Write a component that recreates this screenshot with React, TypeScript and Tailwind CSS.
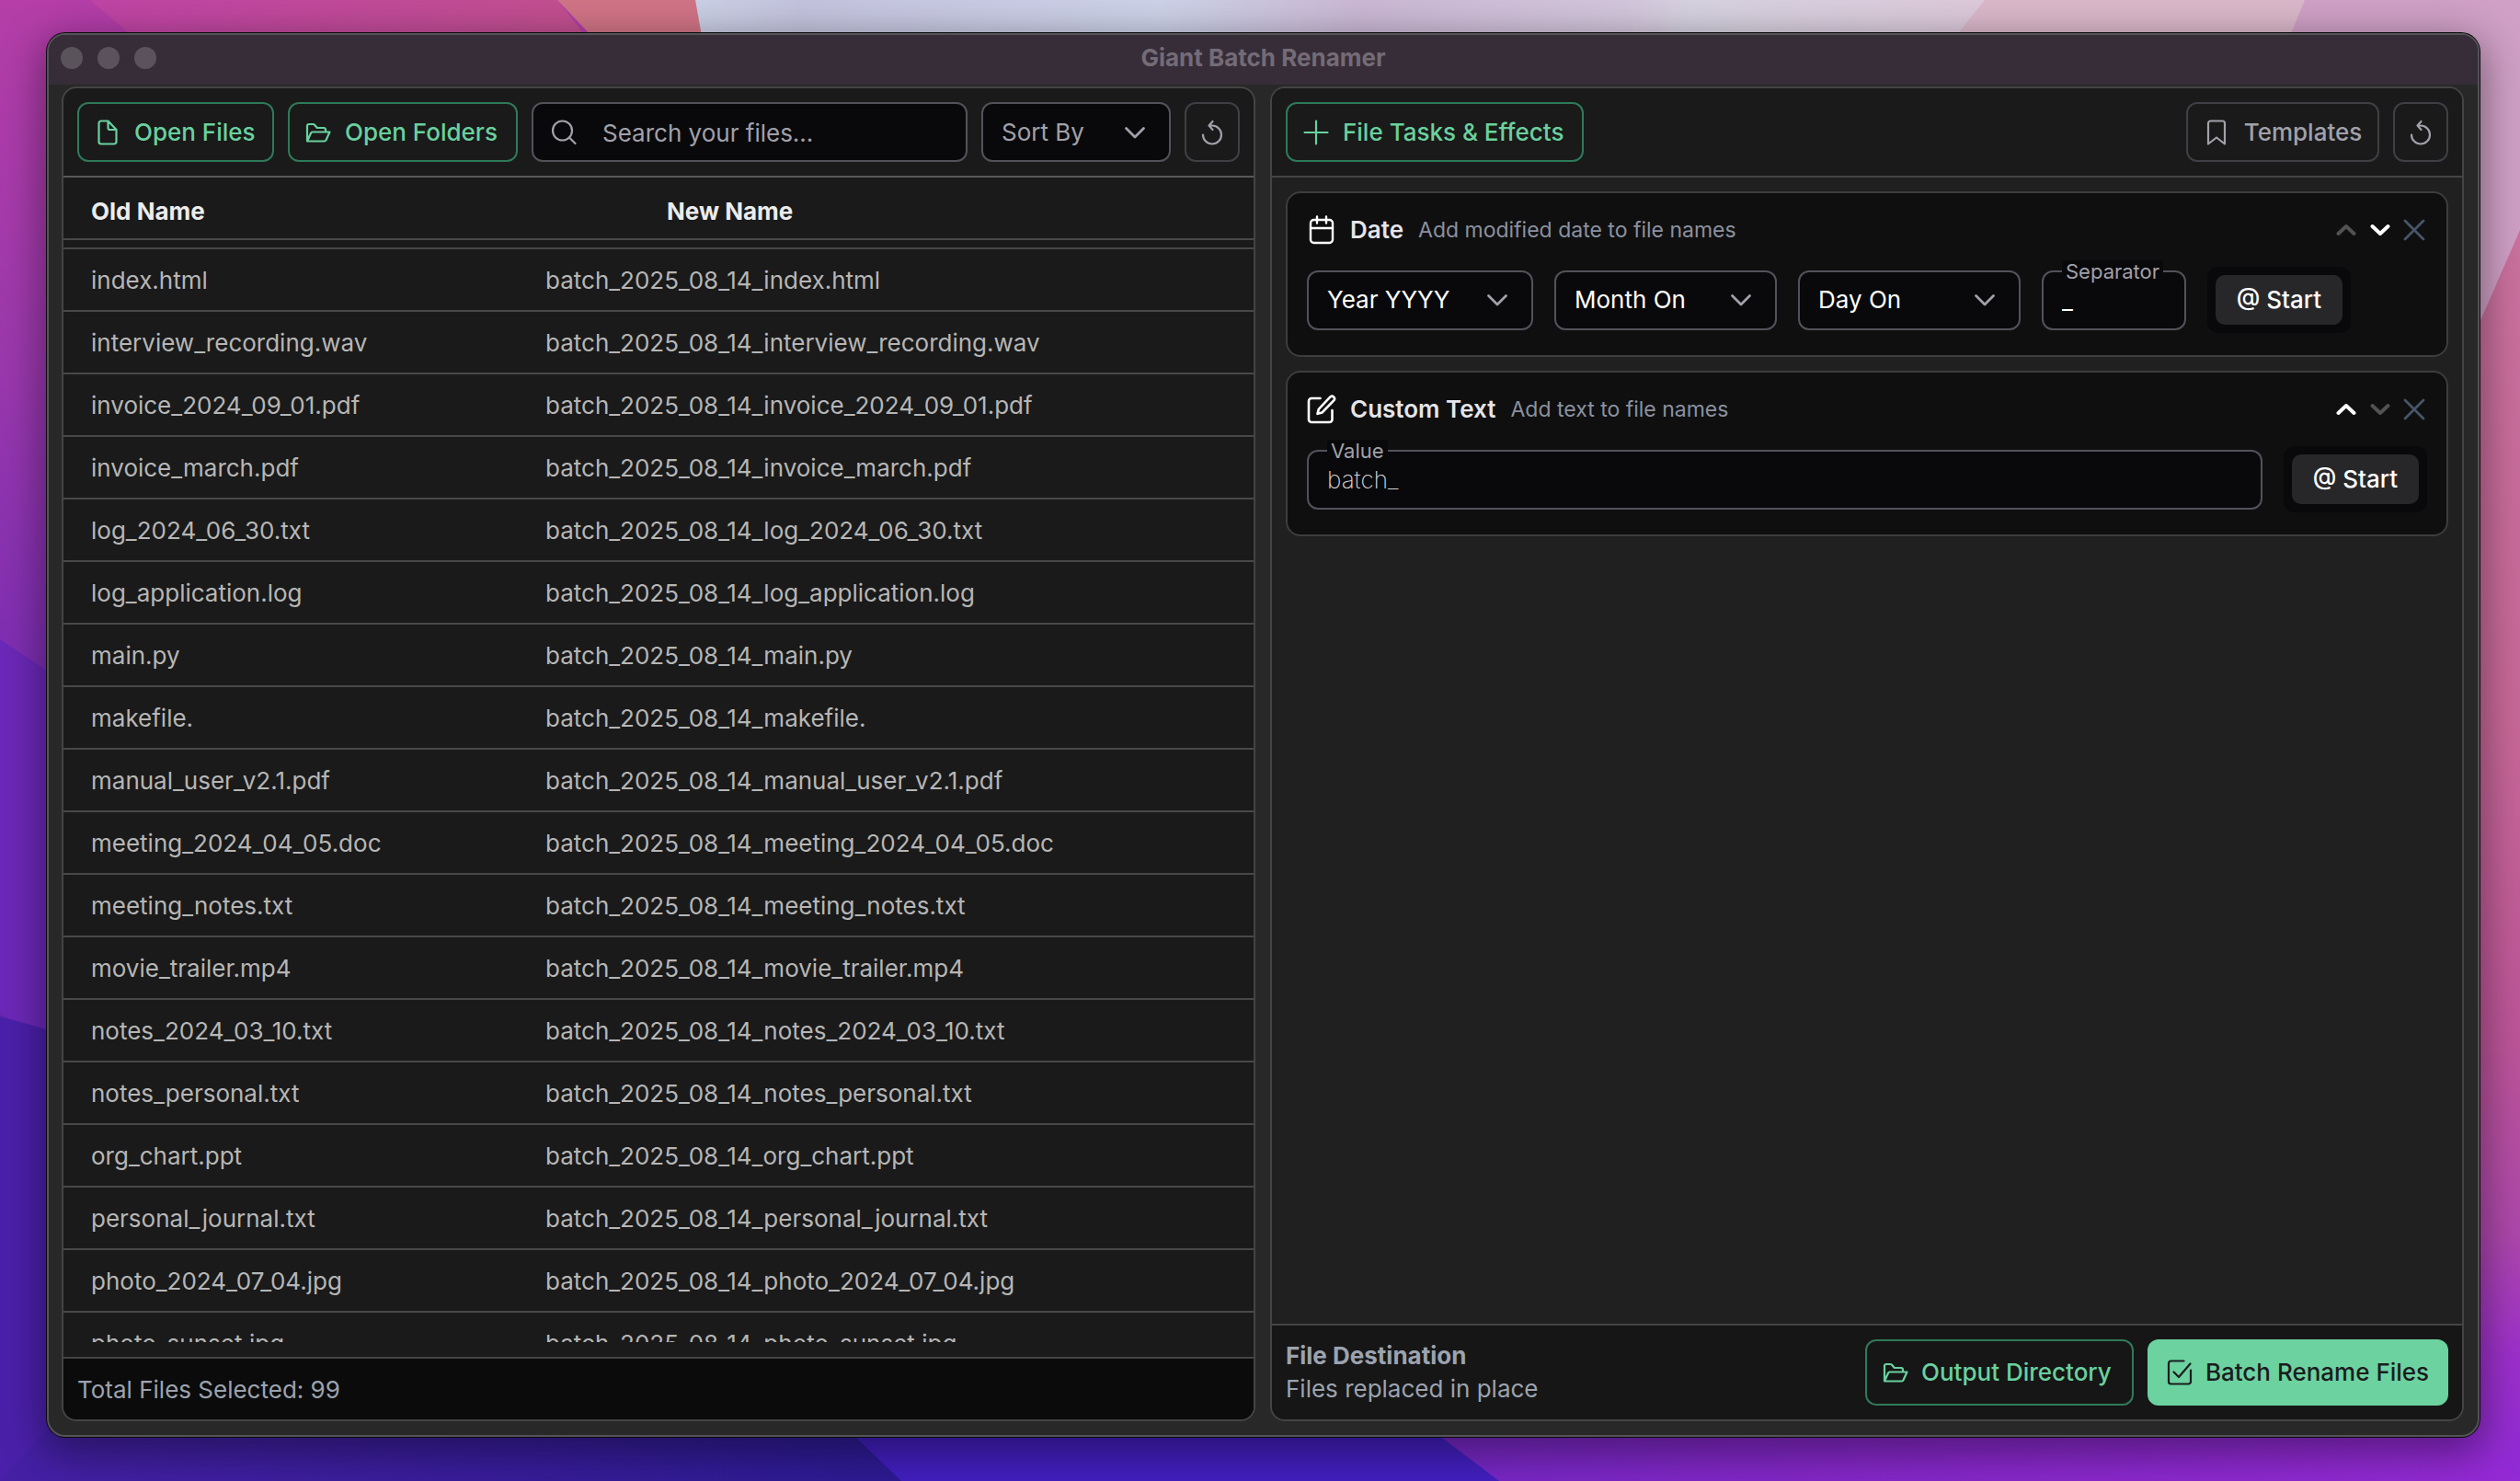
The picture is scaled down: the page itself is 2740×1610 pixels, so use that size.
import React from "react";

const files = [
  "index.html",
  "interview_recording.wav",
  "invoice_2024_09_01.pdf",
  "invoice_march.pdf",
  "log_2024_06_30.txt",
  "log_application.log",
  "main.py",
  "makefile.",
  "manual_user_v2.1.pdf",
  "meeting_2024_04_05.doc",
  "meeting_notes.txt",
  "movie_trailer.mp4",
  "notes_2024_03_10.txt",
  "notes_personal.txt",
  "org_chart.ppt",
  "personal_journal.txt",
  "photo_2024_07_04.jpg",
  "photo_sunset.jpg",
];

type IconProps = { className?: string; width?: number; children: React.ReactNode };

function Icon({ className = "", width = 2, children }: IconProps) {
  return (
    <svg
      viewBox="0 0 28 28"
      className={`size-7 shrink-0 ${className}`}
      fill="none"
      stroke="currentColor"
      strokeWidth={width}
      strokeLinecap="round"
      strokeLinejoin="round"
      aria-hidden="true"
    >
      {children}
    </svg>
  );
}

const FileIcon = () => (
  <Icon width={2.2}>
    <path d="M14.5 1.500H7a2.500 2.500 0 0 0-2.500 2.500v20A2.500 2.500 0 0 0 7 26.500h14a2.500 2.500 0 0 0 2.500-2.500V11zM14.500 1.500v7.500a2 2 0 0 0 2 2h7" />
  </Icon>
);

const FolderIcon = () => (
  <Icon width={2.2}>
    <path d="M2 23.500V7a2 2 0 0 1 2-2h4.500a2 2 0 0 1 1.500.7L12.800 9H20a2 2 0 0 1 2 2v2.500M2 23.500l4-8.800a2 2 0 0 1 1.800-1.200H26.500l-4 8.800a2 2 0 0 1-1.800 1.200z" />
  </Icon>
);

const SearchIcon = () => (
  <Icon width={2.2}>
    <circle cx="12.500" cy="12" r="10.500" />
    <path d="M20 19.500l6.500 6.500" />
  </Icon>
);

const ResetIcon = () => (
  <Icon width={2.200}>
    <path d="M14 6.500a10 10 0 1 1-10 10M14 6.500h-3M14.500 2L10.500 6.500l4 4.500" />
  </Icon>
);

const PlusIcon = () => (
  <Icon width={2.2}>
    <path d="M14 1.500v25M1.500 14h25" />
  </Icon>
);

const BookmarkIcon = () => (
  <Icon width={2.2}>
    <path d="M5 26.500V4A2.500 2.500 0 0 1 7.500 1.500h13A2.500 2.500 0 0 1 23 4V26.500l-9-7z" />
  </Icon>
);

const CheckSquareIcon = () => (
  <Icon width={2.2}>
    <path d="M18.500 1.500H4.500A2.500 2.500 0 0 0 2 4v20A2.500 2.500 0 0 0 4.500 26.500h19a2.500 2.500 0 0 0 2.500-2.500V11.500M7.500 13.500l5.500 5.500L25.500 4.500" />
  </Icon>
);

const Chevron = ({ up = false, bold = false, className = "" }) => (
  <Icon width={bold ? 4 : 2.8} className={className}>
    {bold ? (
      <path d={up ? "M5.500 18L14 10l8.500 8" : "M5.500 10L14 18l8.500-8"} />
    ) : (
      <path d="M4.500 9.500L14 19l9.500-9.500" />
    )}
  </Icon>
);

const CalendarIcon = () => (
  <svg viewBox="0 0 32 32" className="size-8 shrink-0 text-white" fill="none" stroke="currentColor" strokeWidth="2.400" strokeLinecap="round" strokeLinejoin="round" aria-hidden="true">
    <rect x="4" y="5" width="24" height="25" rx="3.500" />
    <path d="M4 14h24M11 1.500v7M21 1.500v7" />
  </svg>
);

const EditIcon = () => (
  <svg viewBox="0 0 32 32" className="size-8 shrink-0 text-white" fill="none" stroke="currentColor" strokeWidth="2.600" strokeLinecap="round" strokeLinejoin="round" aria-hidden="true">
    <path d="M14.500 4H5A3 3 0 0 0 2 7v20A3 3 0 0 0 5 30h19.500a3 3 0 0 0 3-3V17" />
    <path d="M25.200 2.700a2.700 2.700 0 0 1 4 3.700L16.500 19.500l-5 1.300 1.300-5z" />
  </svg>
);

const greenButton =
  "flex h-[65px] shrink-0 items-center gap-[15px] rounded-xl border-2 border-[#2f7a5a] pl-[17px] text-[#69d19f] font-medium";
const ghostButton =
  "flex h-[65px] shrink-0 items-center justify-center gap-4 rounded-xl border-2 border-[#3f3f46] text-[#a1a1aa] font-medium";

function Select({ label, options, className = "", tone = "text-white" }: { label: string; options: string[]; className?: string; tone?: string }) {
  return (
    <div className={`relative shrink-0 ${className}`}>
      <select
        aria-label={label}
        className={`h-[65px] w-full appearance-none rounded-xl border-2 border-[#52525b] bg-[#09090b] pl-5 pr-14 outline-none ${tone}`}
      >
        {options.map((option) => (
          <option key={option}>{option}</option>
        ))}
      </select>
      <div className="pointer-events-none absolute inset-y-0 right-[25px] flex items-center">
        <Chevron className="text-[#a1a1aa]" />
      </div>
    </div>
  );
}

function Field({ id, label, value, className = "", inputClass = "" }: { id: string; label: string; value: string; className?: string; inputClass?: string }) {
  return (
    <div className={`relative ${className}`}>
      <input
        id={id}
        defaultValue={value}
        className={`block h-[65px] w-full rounded-xl border-2 border-[#52525b] bg-[#09090b] px-5 outline-none ${inputClass}`}
      />
      <label htmlFor={id} className="absolute -top-[11px] left-[22px] rounded bg-[#09090b] px-1 text-[22px] leading-6 text-[#a1a1aa]">
        {label}
      </label>
    </div>
  );
}

function StartToggle() {
  return (
    <div className="shrink-0 rounded-xl bg-[#09090b] p-[9px]">
      <button type="button" aria-pressed="true" className="block h-[54px] w-[138px] rounded-[10px] bg-[#27272a] font-medium text-white">
        @ Start
      </button>
    </div>
  );
}

function TaskCard({ icon, title, note, canUp, canDown, children }: { icon: React.ReactNode; title: string; note: string; canUp: boolean; canDown: boolean; children: React.ReactNode }) {
  return (
    <section className="rounded-2xl border-2 border-[#3d3d3d] bg-[#0f0f0f] px-[21px] pb-6 pt-5">
      <header className="flex h-10 items-center">
        {icon}
        <h2 className="ml-[15px] font-semibold text-[#e5e5ea]">{title}</h2>
        <p className="ml-4 text-[23px] text-[#8b91a0]">{note}</p>
        <div className="ml-auto flex items-center gap-[9px]">
          <button type="button" aria-label="Move up" disabled={!canUp} className="text-white disabled:text-[#525252]">
            <Chevron up bold />
          </button>
          <button type="button" aria-label="Move down" disabled={!canDown} className="text-white disabled:text-[#525252]">
            <Chevron bold />
          </button>
          <button type="button" aria-label="Remove" className="text-[#475569]">
            <Icon width={2.8}>
              <path d="M4 4l20 20M24 4L4 24" />
            </Icon>
          </button>
        </div>
      </header>
      <div className="mt-5 flex items-center gap-[23px]">{children}</div>
    </section>
  );
}

function Wallpaper() {
  return (
    <svg className="absolute inset-0 h-full w-full" viewBox="0 0 2740 1610" preserveAspectRatio="none" aria-hidden="true">
      <defs>
        <linearGradient id="base" x1="0" y1="0" x2="0" y2="1">
          <stop offset="0" stopColor="#b53ea8" />
          <stop offset="0.250" stopColor="#9a38ad" />
          <stop offset="0.430" stopColor="#802fb2" />
          <stop offset="1" stopColor="#4520a5" />
        </linearGradient>
        <linearGradient id="magenta" x1="0" y1="0" x2="1" y2="0">
          <stop offset="0" stopColor="#c044a6" />
          <stop offset="1" stopColor="#c2518c" />
        </linearGradient>
        <linearGradient id="pale" x1="0" y1="0" x2="1" y2="0">
          <stop offset="0" stopColor="#cad0e5" />
          <stop offset="0.080" stopColor="#c4c3de" />
          <stop offset="0.350" stopColor="#ccd2e8" />
          <stop offset="0.500" stopColor="#cbb8d4" />
          <stop offset="0.700" stopColor="#d3c6dc" />
          <stop offset="0.750" stopColor="#d6d2e0" />
          <stop offset="1" stopColor="#dec8da" />
        </linearGradient>
        <linearGradient id="right" x1="0" y1="0" x2="0" y2="1">
          <stop offset="0" stopColor="#cb729f" />
          <stop offset="0.400" stopColor="#c86898" />
          <stop offset="0.650" stopColor="#bd5599" />
          <stop offset="0.800" stopColor="#ae48ab" />
          <stop offset="0.900" stopColor="#9d30cc" />
          <stop offset="1" stopColor="#8f2ad6" />
        </linearGradient>
        <linearGradient id="indigo" x1="0" y1="0" x2="1" y2="0">
          <stop offset="0" stopColor="#4520a5" />
          <stop offset="1" stopColor="#2c1a92" />
        </linearGradient>
        <linearGradient id="violet" x1="0" y1="0" x2="1" y2="0">
          <stop offset="0" stopColor="#7427c4" />
          <stop offset="0.400" stopColor="#8427c8" />
          <stop offset="1" stopColor="#942ad5" />
        </linearGradient>
      </defs>
      <rect width="2740" height="1610" fill="url(#base)" />
      <path d="M98 0H606L700 120H240z" fill="url(#magenta)" />
      <path d="M606 0H756L790 120H720z" fill="#d07486" />
      <path d="M756 0H2200V800H900z" fill="url(#pale)" />
      <path d="M2158 0H2740V700H1600z" fill="#dab8ca" />
      <path d="M2506 0H2740V500H2300z" fill="#d0a0c6" />
      <path d="M2740 250L2600 570V1610H2740z" fill="url(#right)" />
      <path d="M0 695L120 775V1200L0 1100z" fill="#6c28b8" />
      <path d="M0 1105L200 1160V1610H0z" fill="#4a20aa" />
      <path d="M100 1500H1000V1610H0z" fill="url(#indigo)" />
      <path d="M865 1500H1500L1640 1610H980z" fill="#421fbf" />
      <path d="M1485 1500H2640L2740 1610H1630z" fill="url(#violet)" />
    </svg>
  );
}

export default function App() {
  return (
    <div className="relative isolate min-h-screen overflow-hidden bg-[#7a2fb5] pb-12 pl-[51px] pr-[44px] pt-9 font-['Inter',sans-serif] text-[26px] leading-9">
      <Wallpaper />
      <main className="relative flex h-[calc(100vh-84px)] flex-col overflow-hidden rounded-[20px] border-2 border-[#545356] bg-[#282828] shadow-[0_0_0_1px_#0c0a0e,0_12px_44px_6px_rgba(0,0,0,0.4)]">
        <header className="flex h-[54px] shrink-0 items-center bg-[#362d39] px-[13px] pb-1">
          <div className="flex flex-1 gap-4">
            <button type="button" aria-label="Close" className="size-6 rounded-full bg-[#5b535c]" />
            <button type="button" aria-label="Minimise" className="size-6 rounded-full bg-[#5b535c]" />
            <button type="button" aria-label="Zoom" className="size-6 rounded-full bg-[#5b535c]" />
          </div>
          <h1 className="font-bold text-[#746b76]">Giant Batch Renamer</h1>
          <div className="flex-1" />
        </header>

        <div className="grid min-h-0 flex-1 grid-cols-2 gap-4 pb-[15px] pl-[14px] pr-[15px] pt-0.5">
          <section className="flex min-h-0 min-w-0 flex-col overflow-hidden rounded-2xl border-2 border-[#444444] bg-[#1a1a1a]">
            <div className="flex gap-[15px] border-b-2 border-[#595959] p-[15px]">
              <button type="button" className={`${greenButton} w-[214px]`}>
                <FileIcon />
                Open Files
              </button>
              <button type="button" className={`${greenButton} w-[250px]`}>
                <FolderIcon />
                Open Folders
              </button>
              <label className="flex h-[65px] min-w-0 flex-1 items-center gap-7 rounded-xl border-2 border-[#52525b] bg-[#09090b] px-[19px] text-[#a1a1aa]">
                <SearchIcon />
                <input
                  type="search"
                  aria-label="Search your files"
                  placeholder="Search your files..."
                  className="min-w-0 flex-1 bg-transparent pt-0.5 outline-none placeholder:text-[#a1a1aa]"
                />
              </label>
              <Select label="Sort by" options={["Sort By", "Name", "Date"]} className="w-[206px]" tone="text-[#a1a1aa]" />
              <button type="button" aria-label="Reset files" className={`${ghostButton} w-[60px]`}>
                <ResetIcon />
              </button>
            </div>

            <div className="min-h-0 flex-1 overflow-hidden">
              <table className="w-full table-fixed border-separate border-spacing-0 text-left">
                <thead>
                  <tr>
                    <th className="h-[68px] w-[494px] border-b-2 border-[#484848] pb-0 pl-[30px] pt-2 font-bold text-[#ececec]">Old Name</th>
                    <th className="h-[68px] border-b-2 border-[#484848] pb-0 pl-[162px] pt-2 font-bold text-[#ececec]">New Name</th>
                  </tr>
                </thead>
                <tbody className="text-[#b6b6b6]">
                  <tr aria-hidden="true">
                    <td colSpan={2} className="h-2 p-0" />
                  </tr>
                  {files.map((name) => (
                    <tr key={name}>
                      <td className="h-[68px] border-t-2 border-[#484848] pb-0 pl-[30px] pt-0.5">{name}</td>
                      <td className="h-[68px] border-t-2 border-[#484848] pb-0 pl-[30px] pt-0.5">batch_2025_08_14_{name}</td>
                    </tr>
                  ))}
                </tbody>
              </table>
            </div>

            <footer className="mt-4 flex h-[68px] shrink-0 items-center border-t-2 border-[#444444] bg-[#0b0b0b] px-[15px] pt-0.5 text-[#9ca3af]">
              Total Files Selected: 99
            </footer>
          </section>

          <section className="flex min-h-0 min-w-0 flex-col overflow-hidden rounded-2xl border-2 border-[#444444] bg-[#202020]">
            <div className="flex gap-[15px] border-b-2 border-[#444444] bg-[#1a1a1a] p-[15px]">
              <button type="button" className={`${greenButton} w-[324px]`}>
                <PlusIcon />
                File Tasks &amp; Effects
              </button>
              <div className="flex-1" />
              <button type="button" className={`${ghostButton} w-[210px]`}>
                <BookmarkIcon />
                Templates
              </button>
              <button type="button" aria-label="Reset tasks" className={`${ghostButton} w-[60px]`}>
                <ResetIcon />
              </button>
            </div>

            <div className="flex min-h-0 flex-1 flex-col gap-[15px] p-[15px]">
              <TaskCard icon={<CalendarIcon />} title="Date" note="Add modified date to file names" canUp={false} canDown>
                <Select label="Year format" options={["Year YYYY", "Year YY"]} className="w-[246px]" />
                <Select label="Month" options={["Month On", "Month Off"]} className="w-[242px]" />
                <Select label="Day" options={["Day On", "Day Off"]} className="w-[242px]" />
                <Field id="separator" label="Separator" value="_" className="w-[157px] shrink-0" inputClass="text-white" />
                <StartToggle />
              </TaskCard>
              <TaskCard icon={<EditIcon />} title="Custom Text" note="Add text to file names" canUp canDown={false}>
                <Field id="value" label="Value" value="batch_" className="min-w-0 flex-1" inputClass="font-extralight text-[#d4d4d8]" />
                <StartToggle />
              </TaskCard>
            </div>

            <footer className="flex shrink-0 items-center gap-[15px] border-t-2 border-[#444444] bg-[#161616] p-[15px] text-[#9ca3af]">
              <div className="flex-1">
                <h2 className="font-bold">File Destination</h2>
                <p>Files replaced in place</p>
              </div>
              <button
                type="button"
                className="flex h-[72px] w-[292px] items-center gap-[14px] rounded-xl border-2 border-[#2f7a5a] pl-[17px] font-medium text-[#69d19f]"
              >
                <FolderIcon />
                Output Directory
              </button>
              <button type="button" className="flex h-[72px] w-[327px] items-center justify-center gap-[14px] rounded-xl bg-[#6bd2a0] font-medium text-[#1c1c1e]">
                <CheckSquareIcon />
                Batch Rename Files
              </button>
            </footer>
          </section>
        </div>
      </main>
    </div>
  );
}
